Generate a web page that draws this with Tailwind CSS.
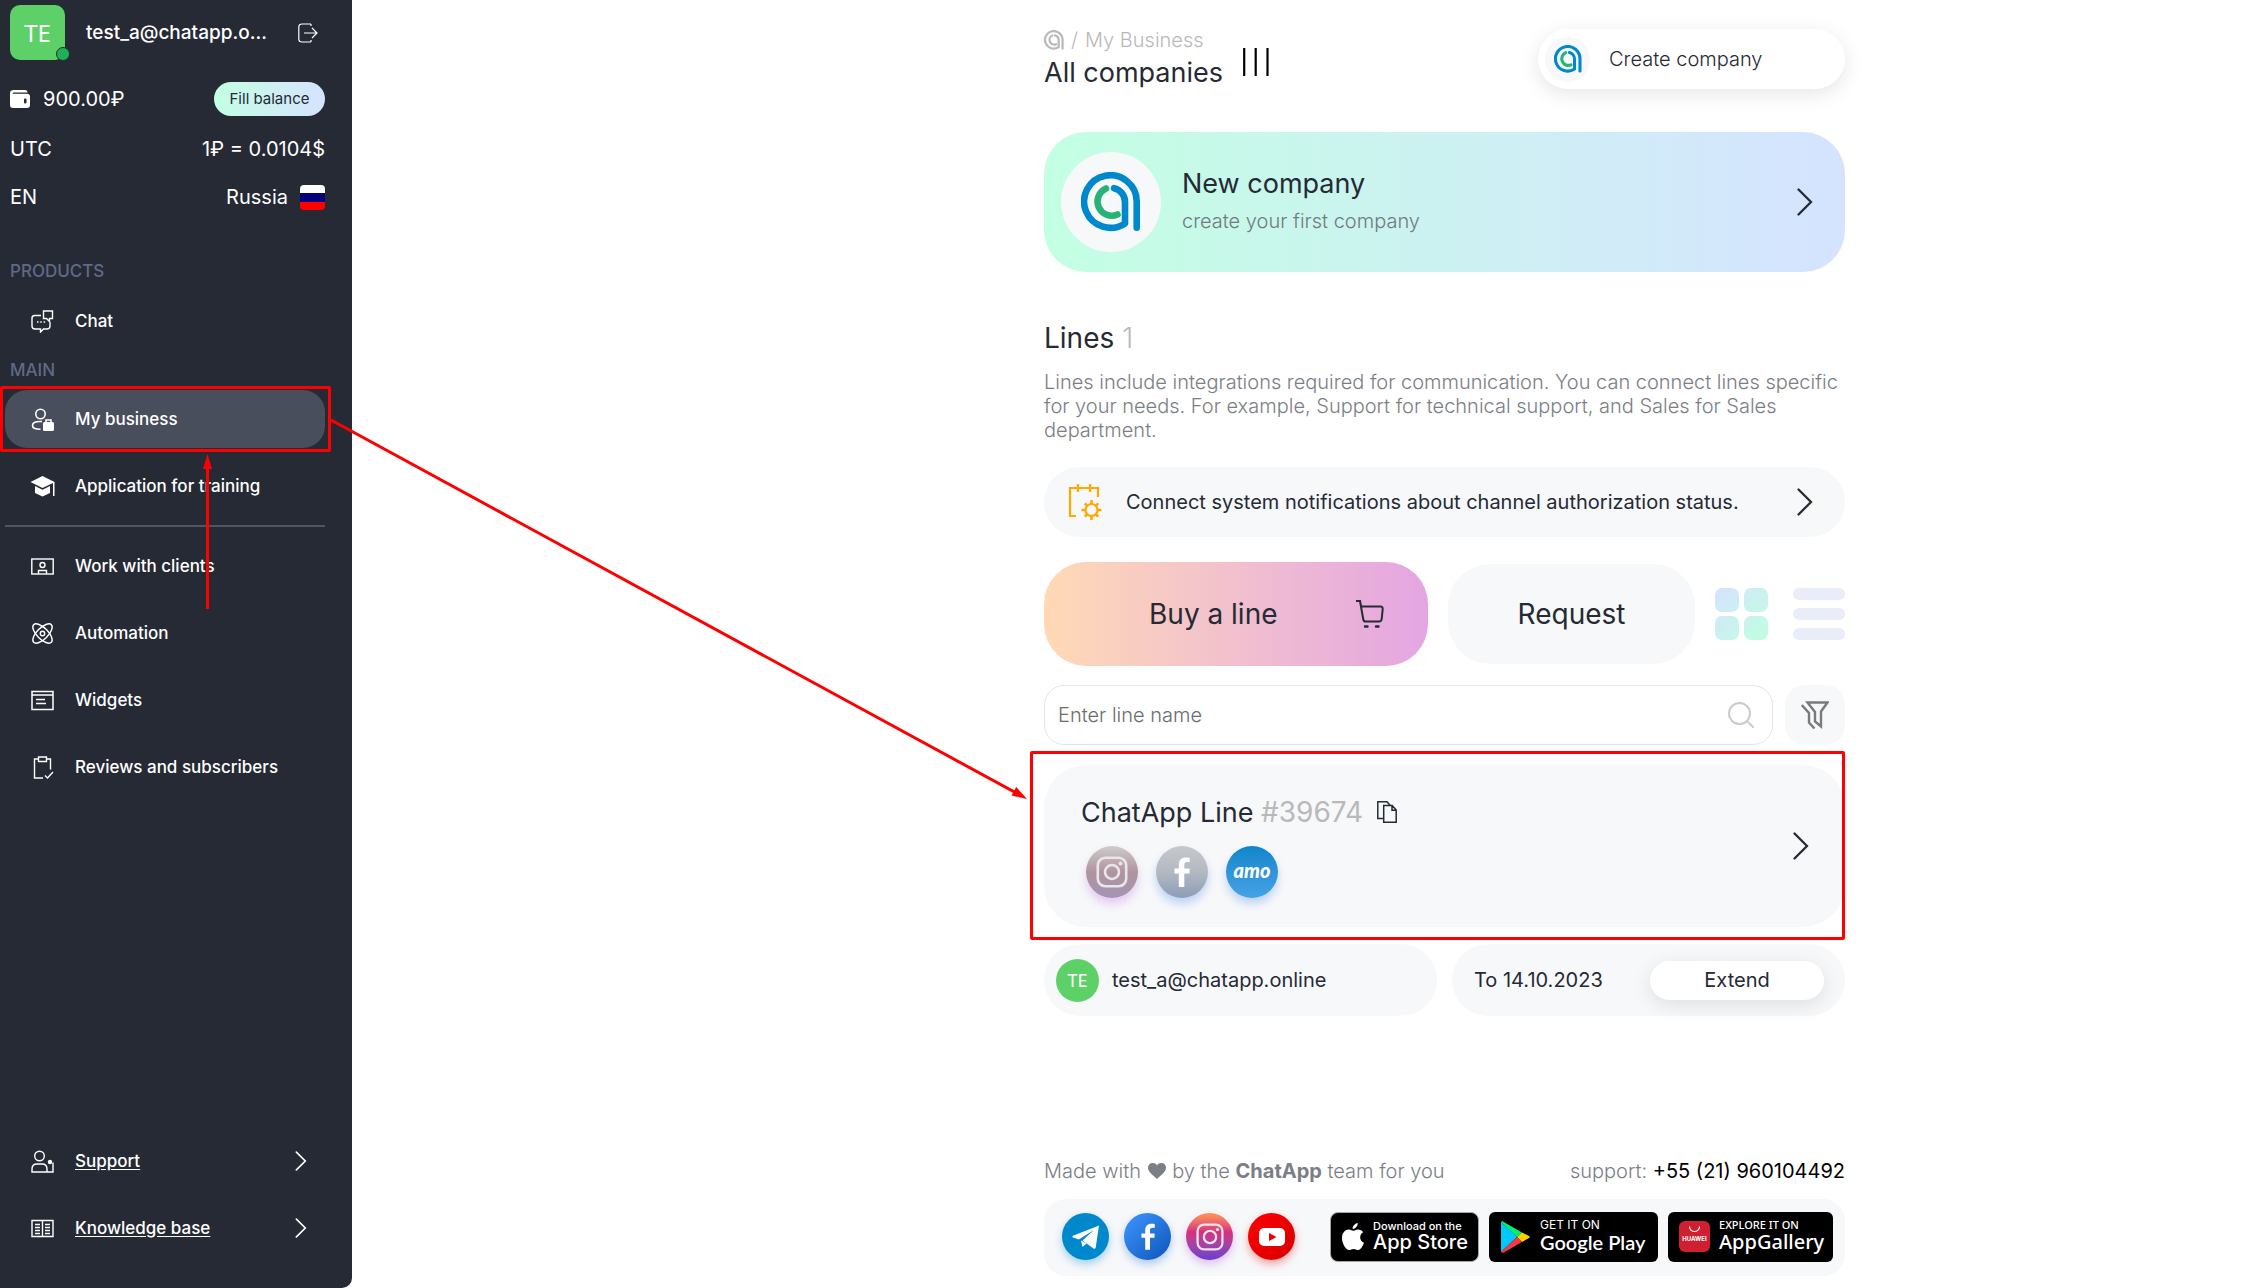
<!DOCTYPE html>
<html lang="en">
<head>
<meta charset="utf-8">
<meta name="viewport" content="width=device-width, initial-scale=1">
<title>ChatApp – All companies</title>
<script src="https://cdn.jsdelivr.net/npm/@tailwindcss/browser@4"></script>
</head>
<body class="relative flex min-h-screen bg-white font-['Inter',sans-serif] text-[20px] leading-[24px] text-[#252a35]">

<!-- Shared symbols -->
<svg class="hidden" aria-hidden="true">
  <symbol id="logo" viewBox="0 0 60 60">
    <g fill="none" stroke-width="6.6" stroke-linecap="round" stroke-linejoin="round">
      <path stroke="#0088cc" d="M55.7 55.7V29.5A26.3 26.3 0 1 0 44 51.4V30A14 14 0 0 0 33 16.2"/>
      <path stroke="#27b376" d="M25 16.5A14 14 0 0 0 36.500 42.500"/>
    </g>
  </symbol>
  <symbol id="logo-mono" viewBox="0 0 60 60">
    <g fill="none" stroke="#b9b9b9" stroke-width="6.6" stroke-linecap="round" stroke-linejoin="round">
      <path d="M55.7 55.7V29.5A26.3 26.3 0 1 0 44 51.4V30A14 14 0 0 0 33 16.2"/>
      <path d="M25 16.5A14 14 0 0 0 36.500 42.500"/>
    </g>
  </symbol>
  <symbol id="chevron" viewBox="0 0 16 28">
    <path d="M1.500 1.500 14 14 1.500 26.500" fill="none" stroke="currentColor" stroke-width="2.300" stroke-linecap="round"/>
  </symbol>
  <symbol id="insta" viewBox="0 0 32 32">
    <g fill="none" stroke="#e8e6ea" stroke-width="2.600"><rect x="1.800" y="1.800" width="28.400" height="28.400" rx="7.500"/><circle cx="16" cy="16" r="7"/></g>
    <circle cx="24.500" cy="7.500" r="1.900" fill="#e8e6ea"/>
  </symbol>
  <symbol id="fb" viewBox="0 0 16 30">
    <path fill="#fff" d="M4.800 30V16.500H.5V11.500h4.300V8C4.800 3 7.500.4 12 .4c1.500 0 2.800.1 3.700.3v4.400h-2.500c-2.200 0-2.900 1.200-2.900 2.900v3.500h5.200v5h-5.200V30z"/>
  </symbol>
</svg>

<aside class="flex w-[352px] shrink-0 flex-col rounded-br-[10px] bg-[#252a35] pt-[5px] pr-[27px] pb-[31px] pl-[5px] text-white">
  <div class="flex h-[55px] items-center pl-[5px]">
    <div class="relative flex size-[55px] shrink-0 items-center justify-center rounded-[10px] bg-[#5dd167] font-['Noto_Sans',sans-serif] text-[24px]">TE
      <span class="absolute -right-[5px] -bottom-px size-[14px] rounded-full border border-[#252a35] bg-[#1fb155]"></span>
    </div>
    <span class="ml-[21px] w-[190px] text-[19px] font-medium">test_a@chatapp.o...</span>
    <button type="button" class="ml-[22px]" aria-label="Log out">
      <svg class="size-[20px]" viewBox="0 0 20 20" fill="none" stroke="#fff" stroke-width="1.200"><path d="M13 1H4Q.8 1 .8 4v12q0 3 3.200 3h9M13 3v-2M13 17v2M6 10h13M14 5l5 5-5 5"/></svg>
    </button>
  </div>
  <div class="mt-[22px] flex h-[34px] items-center pl-[5px]">
    <svg class="mr-[13px] h-[20px] w-[20px]" viewBox="0 0 20 20"><path fill="#fff" d="M4 1h11q2.500 0 2.500 2.500H3.500q-.8.100-.8.700t.8.600H17q3 0 3 3V16q0 3-3 3H3q-3 0-3-3V4Q0 1 4 1z"/><rect x="14" y="9.500" width="2.500" height="5" rx="1" fill="#252a35"/></svg>
    <span>900.00₽</span>
    <button type="button" class="ml-auto h-[34px] w-[111px] rounded-full bg-linear-to-r from-[#c3ffe3] to-[#d5e3ff] text-[15px] text-[#252a35]">Fill balance</button>
  </div>
  <div class="mt-[18px] flex h-[30px] items-center justify-between pl-[5px]"><span>UTC</span><span>1₽ = 0.0104$</span></div>
  <div class="mt-[18px] flex h-[30px] items-center pl-[5px]"><span>EN</span><span class="mr-[12px] ml-auto">Russia</span>
    <svg class="size-[25px] rounded-[4px]" viewBox="0 0 25 25"><path fill="#fff" d="M0 0h25v9H0z"/><path fill="#00007e" d="M0 8h25v9H0z"/><path fill="#f00" d="M0 17h25v8H0z"/></svg>
  </div>

  <h2 class="mt-[47px] pl-[5px] text-[17px] font-medium text-[#5f6b85]">PRODUCTS</h2>
  <nav class="mt-[9px] text-[17px] font-medium">
    <a href="#" class="flex h-[58px] items-center gap-[21px] pl-[26px]">
      <svg class="size-[23px]" viewBox="0 0 23 23" fill="none" stroke="#fff" stroke-width="1.400"><path d="M10 5.500H4Q1 5.500 1 8v8q0 3 3 3h5.500v3l3-3H16q3 0 3-3v-4M12.500 5V1h9v7.500h-3v3l-3-3h-3V5"/><path stroke-width="1.600" d="M6 12h1.500M9.300 12h1.500M12.600 12h1.500"/></svg>
      Chat</a>
  </nav>
  <h2 class="mt-[8px] pl-[5px] text-[17px] font-medium text-[#5f6b85]">MAIN</h2>
  <nav class="mt-[8px] flex flex-col gap-[9px] text-[17px] font-medium">
    <a href="#" class="relative flex h-[58px] items-center gap-[21px] rounded-[22px] bg-[#484e5b] pl-[26px]">
      <svg class="size-[23px]" viewBox="0 0 23 23" fill="none" stroke="#fff" stroke-width="1.600"><circle cx="9.500" cy="6" r="4.700"/><path d="M9 13.500q-7.500 0-7.500 4 0 3.800 8 3.800M9 13.500h2"/><path d="M15 14v-2h5v2"/><rect x="12" y="14" width="11" height="9" rx="1.500" fill="#fff" stroke="none"/></svg>
      My business
      <span class="pointer-events-none absolute -top-[4px] -right-[6px] -bottom-[4px] -left-[5px] rounded-[2px] border-[3px] border-[#ff0000]"></span>
    </a>
    <a href="#" class="flex h-[58px] items-center gap-[21px] pl-[26px]">
      <svg class="size-[23px] overflow-visible" viewBox="0 0 23 23" fill="#fff"><path d="M11.500 1 23.500 7v14H22V8l-10.500 5L-.5 7zM4 11l7.500 3.700L19 11v7l-7.500 3.500L4 18z"/></svg>
      Application for training</a>
  </nav>
  <hr class="mt-[10px] border-t-2 border-[#50555f]">
  <nav class="mt-[10px] flex flex-col gap-[9px] text-[17px] font-medium">
    <a href="#" class="flex h-[58px] items-center gap-[21px] pl-[26px]">
      <svg class="size-[23px]" viewBox="0 0 23 23" fill="none" stroke="#fff" stroke-width="1.400"><rect x=".8" y="4" width="21.400" height="15"/><circle cx="11.500" cy="10" r="2.500"/><path d="M7.500 19v-3.500h8V19"/></svg>
      Work with clients</a>
    <a href="#" class="flex h-[58px] items-center gap-[21px] pl-[26px]">
      <svg class="size-[23px]" viewBox="0 0 23 23" fill="none" stroke="#fff" stroke-width="1.400"><ellipse cx="11.500" cy="11.500" rx="12.500" ry="5.500" transform="rotate(45 11.500 11.500)"/><ellipse cx="11.500" cy="11.500" rx="12.500" ry="5.500" transform="rotate(-45 11.500 11.500)"/><circle cx="11.500" cy="11.500" r="2.200"/></svg>
      Automation</a>
    <a href="#" class="flex h-[58px] items-center gap-[21px] pl-[26px]">
      <svg class="size-[23px]" viewBox="0 0 23 23" fill="none" stroke="#fff" stroke-width="1.500"><rect x="1" y="2.500" width="21" height="18"/><path d="M1 6h21M5 10.500h9M5 14.500h10"/></svg>
      Widgets</a>
    <a href="#" class="flex h-[58px] items-center gap-[21px] pl-[26px]">
      <svg class="size-[23px]" viewBox="0 0 23 23" fill="none" stroke="#fff" stroke-width="1.400"><path d="M7.500 3H3.500v19H12M15.500 3h4v10.500M7.500 1h8v4.500h-8zM14 19.500l2.500 2.500 5.500-6"/></svg>
      Reviews and subscribers</a>
  </nav>
  <nav class="mt-auto flex flex-col gap-[9px] text-[17px] font-medium">
    <a href="#" class="flex h-[58px] items-center gap-[21px] pr-[18px] pl-[26px]">
      <svg class="size-[23px]" viewBox="0 0 23 23" fill="none" stroke="#fff" stroke-width="1.400"><circle cx="8.500" cy="6" r="4.800"/><path d="M1 22v-3q0-5 5-5h5q5 0 5 5v3zM16 22h6V12.500"/><circle cx="19" cy="12" r="1.500" fill="#fff"/></svg>
      <span class="underline underline-offset-2">Support</span><svg class="ml-auto h-[20px] w-[12px]"><use href="#chevron"/></svg></a>
    <a href="#" class="flex h-[58px] items-center gap-[21px] pr-[18px] pl-[26px]">
      <svg class="size-[23px]" viewBox="0 0 23 23" fill="none" stroke="#fff" stroke-width="1.400"><path d="M1 3.500h21v16H1zM11.500 3.500v16M4 7.500h5M4 10.500h5M4 13.500h5M4 16.500h5M14 7.500h5M14 10.500h5M14 13.500h5M14 16.500h5"/></svg>
      <span class="underline underline-offset-2">Knowledge base</span><svg class="ml-auto h-[20px] w-[12px]"><use href="#chevron"/></svg></a>
  </nav>
</aside>

<main class="flex-1 pt-[28px] pb-[10px] pl-[289px]">
 <div class="mx-auto max-w-[801px]">
  <header class="flex items-start justify-between">
    <div>
      <div class="flex items-center font-light text-[#b9b9b9]"><a href="#" aria-label="Home"><svg class="block size-[20px]"><use href="#logo-mono"/></svg></a><span class="mx-[7px]">/</span><a href="#">My Business</a></div>
      <div class="mt-[4px] flex gap-[20px]">
        <h1 class="text-[27px] leading-[34px]">All companies</h1>
        <svg class="-mt-[8px] h-[28px] w-[26px]" viewBox="0 0 26 28"><path d="M1.200 0v28M12.700 0v28M24.500 0v28" stroke="#000" stroke-width="2.200"/></svg>
      </div>
    </div>
    <button type="button" class="mt-px flex h-[60px] w-[307px] items-center rounded-full bg-white pl-[7px] font-light shadow-[0_5px_20px_rgba(0,0,0,0.1)]">
      <span class="flex size-[45px] items-center justify-center rounded-full bg-[#f7f8fa]"><svg class="size-[28px]"><use href="#logo"/></svg></span>
      <span class="ml-[19px]">Create company</span>
    </button>
  </header>

  <a href="#" class="mt-[42px] flex h-[140px] items-center rounded-[42px] bg-linear-to-r from-[#c3ffe3] to-[#d5e3ff] pr-[32px] pl-[17px]">
    <span class="flex size-[100px] items-center justify-center rounded-full bg-[#f7f8fa]"><svg class="size-[60px]"><use href="#logo"/></svg></span>
    <span class="ml-[21px] flex flex-col gap-[8px] pb-[4px]"><span class="text-[27px] leading-[34px]">New company</span><span class="font-light text-[#6f7b80]">create your first company</span></span>
    <svg class="ml-auto h-[28px] w-[16px]"><use href="#chevron"/></svg>
  </a>

  <h2 class="mt-[49px] text-[28px] leading-[34px]">Lines <span class="font-light text-[#b9b9b9]">1</span></h2>
  <p class="mt-[15px] font-light text-[#7c7e86]">Lines include integrations required for communication. You can connect lines specific for your needs. For example, Support for technical support, and Sales for Sales department.</p>

  <a href="#" class="mt-[25px] flex h-[70px] items-center rounded-full bg-[#f7f8fa] pr-[32px] pl-[24px]">
    <svg class="h-[36px] w-[34px]" viewBox="0 0 34 36" fill="none" stroke="#ffa800" stroke-width="2.200"><path d="M8 32H2V4h28v9M10 0v8M22 0v8"/><circle cx="23.500" cy="26" r="6"/><path stroke-width="2.600" d="M23.500 20v-4M23.500 32v4M17.500 26h-4M29.500 26h4M19.300 21.800l-2.500-2.500M27.700 30.200l2.500 2.500M19.300 30.200l-2.500 2.500M27.700 21.800l2.500-2.500"/></svg>
    <span class="ml-[24px]">Connect system notifications about channel authorization status.</span>
    <svg class="ml-auto h-[28px] w-[16px]"><use href="#chevron"/></svg>
  </a>

  <div class="mt-[25px] flex items-center">
    <button type="button" class="flex h-[104px] w-[384px] items-center rounded-[42px] bg-linear-to-r from-[#ffd9b5] to-[#e4a5e2] pr-[44px] pl-[105px] text-[28px] leading-[34px]">Buy a line
      <svg class="ml-auto size-[28px]" viewBox="0 0 28 28" fill="none" stroke="#252a35" stroke-width="2"><path d="M0 1h4l1.200 5.500h19.300q2.300 0 2.200 2.500l-1 10q-.3 2.500-2.700 2.500H9.500Q7.600 21.500 7.200 19L4 1"/><path stroke-width="2.400" stroke-linecap="round" d="M9 26.500h2.500M20 26.500h2.500"/></svg>
    </button>
    <button type="button" class="ml-[20px] h-[100px] w-[247px] rounded-[42px] bg-[#f7f8fa] text-[28px] leading-[34px]">Request</button>
    <button type="button" class="ml-[20px]" aria-label="Tile view">
      <svg class="h-[52px] w-[53px]" viewBox="0 0 53 52"><defs><linearGradient id="tile" gradientUnits="userSpaceOnUse" x1="0" y1="0" x2="53" y2="52"><stop stop-color="#d5e3ff"/><stop offset="1" stop-color="#c0ffe0"/></linearGradient></defs><g fill="url(#tile)"><rect width="24" height="24" rx="7"/><rect x="29" width="24" height="24" rx="7"/><rect y="28" width="24" height="24" rx="7"/><rect x="29" y="28" width="24" height="24" rx="7"/></g></svg>
    </button>
    <button type="button" class="ml-auto" aria-label="List view">
      <svg class="size-[52px]" viewBox="0 0 52 52" fill="#e8edf9"><rect width="52" height="12" rx="6"/><rect y="20" width="52" height="12" rx="6"/><rect y="40" width="52" height="12" rx="6"/></svg>
    </button>
  </div>

  <div class="mt-[19px] flex gap-[12px]">
    <label class="flex h-[60px] flex-1 items-center rounded-[20px] border border-[#e4e4ee] pr-[18px] pl-[13px]">
      <input type="text" aria-label="Line name" placeholder="Enter line name" class="min-w-0 flex-1 font-light outline-none placeholder:text-[#6c6c6c]">
      <svg class="size-[26px]" viewBox="0 0 26 26" fill="none" stroke="#c9cbce" stroke-width="2"><circle cx="11.500" cy="11.500" r="10.500"/><path stroke-linecap="round" d="M19 19l6 6"/></svg>
    </label>
    <button type="button" class="flex size-[60px] items-center justify-center rounded-[20px] bg-[#f7f8fa]" aria-label="Filter">
      <svg class="size-[28px]" viewBox="0 0 28 28" fill="none" stroke="#7a7a7a" stroke-width="2.400"><path d="M6.500 1.500h20L20 10.500v15L14 20.500V11zM.8 4 8 12v9.500l5.500 6"/></svg>
    </button>
  </div>

  <div class="relative mt-[20px]">
    <article class="flex h-[162px] items-center rounded-[42px] bg-[#f7f8fa] pr-[36px] pl-[37px]">
      <div>
        <div class="flex items-center"><h3 class="text-[27px] leading-[34px]">ChatApp Line <span class="text-[28px] text-[#b9b9b9]">#39674</span></h3>
          <button type="button" class="ml-[14px]" aria-label="Copy line number"><svg class="h-[22px] w-[20px]" viewBox="0 0 20 22" fill="none" stroke="#252a35" stroke-width="1.500"><path d="M7 17.500H.8V.8H10l3 3.500M6.700 4.500h8.500l4 4.500v12.200H6.700zM15 4.500v4.700h4"/></svg></button>
        </div>
        <div class="mt-[16px] flex gap-[18px] pl-[5px]">
          <span class="flex size-[52px] items-center justify-center rounded-full bg-linear-to-b from-[#cfcbca] via-[#b0949d] to-[#a394b5] shadow-[0_6px_8px_rgba(190,100,220,0.3)]"><svg class="size-[32px]"><use href="#insta"/></svg></span>
          <span class="flex size-[52px] items-center justify-center rounded-full bg-linear-to-b from-[#c6c8cc] via-[#b3b9c2] to-[#8b9db8] shadow-[0_6px_8px_rgba(60,130,230,0.3)]"><svg class="h-[30px] w-[16px]"><use href="#fb"/></svg></span>
          <span class="flex size-[52px] items-center justify-center rounded-full bg-linear-to-b from-[#0a86cb] to-[#45a2e6] pb-[3px] font-['Lato',sans-serif] text-[20px] font-black text-white italic shadow-[0_6px_8px_rgba(60,130,230,0.3)]">amo</span>
        </div>
      </div>
      <svg class="ml-auto h-[28px] w-[16px]"><use href="#chevron"/></svg>
    </article>
    <span class="pointer-events-none absolute -top-[14px] right-0 -bottom-[13px] -left-[14px] rounded-[2px] border-[3px] border-[#ff0000]"></span>
  </div>

  <div class="mt-[17px] grid grid-cols-2 gap-[15px]">
    <div class="flex h-[72px] items-center rounded-full bg-[#f7f8fa] pl-[12px]">
      <span class="flex size-[43px] items-center justify-center rounded-full bg-[#5dd167] font-['Noto_Sans',sans-serif] text-[18px] text-white">TE</span>
      <span class="ml-[13px]">test_a@chatapp.online</span>
    </div>
    <div class="flex h-[72px] items-center justify-between rounded-full bg-[#f7f8fa] pr-[21px] pl-[22px]">
      <span>To 14.10.2023</span>
      <button type="button" class="h-[39px] w-[174px] rounded-full bg-white shadow-[0_5px_20px_rgba(0,0,0,0.1)]">Extend</button>
    </div>
  </div>

  <footer class="mt-[143px]">
    <div class="flex justify-between font-light text-[#7c7e86]">
      <p>Made with <svg class="mx-px inline h-[16px] w-[18px] align-[-1px]" viewBox="0 0 18 16"><path fill="#7c7e86" d="M9 16C4 11.500 0 8.500 0 4.800 0 2 2 0 4.700 0 6.500 0 8 .8 9 2.400 10 .8 11.500 0 13.300 0 16 0 18 2 18 4.800 18 8.500 14 11.500 9 16z"/></svg> by the <b class="font-bold">ChatApp</b> team for you</p>
      <p>support: <a href="#" class="font-normal text-black">+55 (21) 960104492</a></p>
    </div>
    <div class="mt-[16px] flex h-[77px] items-center rounded-[22px] bg-[#f7f8fa] pr-[12px] pb-[2px] pl-[18px]">
      <div class="flex gap-[15px]">
        <a href="#" aria-label="Telegram" class="flex size-[47px] items-center justify-center rounded-full bg-[#0088cc] shadow-[0_4px_8px_rgba(0,136,204,0.35)]"><svg class="size-[26px] overflow-visible" viewBox="0 0 26 26" fill="#fff"><path d="M26 1.500 0 11.800q-1.600.9 0 1.800l5.800 1.900L21 6 9.500 16.500l11 8q1.700.9 2.200-1z"/><path d="M8 16.500l1.500 6.500 4-3.500z"/></svg></a>
        <a href="#" aria-label="Facebook" class="flex size-[47px] items-center justify-center rounded-full bg-linear-to-br from-[#3f97ff] to-[#0b55ba] shadow-[0_4px_8px_rgba(30,110,220,0.35)]"><svg class="h-[27px] w-[14px]"><use href="#fb"/></svg></a>
        <a href="#" aria-label="Instagram" class="flex size-[47px] items-center justify-center rounded-full bg-linear-to-b from-[#fb8c55] from-5% via-[#d82d7e] via-40% to-[#6a3ad0] shadow-[0_4px_8px_rgba(160,60,220,0.3)]"><svg class="size-[28px]"><use href="#insta"/></svg></a>
        <a href="#" aria-label="YouTube" class="flex size-[47px] items-center justify-center rounded-full bg-linear-to-br from-[#ff0000] to-[#d60000] shadow-[0_4px_8px_rgba(230,0,0,0.35)]"><svg class="h-[18px] w-[26px]" viewBox="0 0 26 18"><rect width="26" height="18" rx="5" fill="#fff"/><path d="M10 5l7.500 4L10 13z" fill="#e00"/></svg></a>
      </div>
      <div class="ml-auto flex items-center gap-[10px] text-white">
        <a href="#" class="flex h-[50px] w-[149px] items-center rounded-[8px] border border-[#a6a6a6] bg-black pl-[11px]">
          <svg class="h-[28px] w-[22px]" viewBox="0 0 22 28" fill="#fff"><path d="M15.700 0c.3 2.600-2.200 6-5 6C10.300 3.300 12.800.5 15.700 0zM11.200 7.800c1.200 0 2.700-1.400 5-1.400 1.800 0 3.800 1 5 2.800-4.500 2.600-3.700 8.700.8 10.600-1.200 3.500-3.400 7.200-5.800 7.200-1.800 0-2.400-1.100-4.600-1.100S8.700 27 7.100 27C4 27 0 20.700 0 15c0-5.500 3.500-8.500 6.700-8.500 2.100 0 3.600 1.300 4.500 1.300z"/></svg>
          <span class="ml-[9px] flex flex-col pb-[2px] font-medium"><span class="text-[11px] leading-[12px]">Download on the</span><span class="text-[20px] leading-[20px]">App Store</span></span>
        </a>
        <a href="#" class="flex h-[50px] w-[169px] items-center rounded-[6px] bg-black pl-[12px]">
          <svg class="h-[32px] w-[29px]" viewBox="0 0 29 32"><path fill="#00c8ff" d="M0 1v30l16-15z"/><path fill="#00f076" d="M1 0l20 11.500L16 16 0 1z"/><path fill="#ffd000" d="M21 11.500l7 3.500q1.500 1 0 2l-7 4-5-5z"/><path fill="#f53848" d="M0 31l16-15 5 5L2 32z"/></svg>
          <span class="ml-[10px] flex flex-col pb-[4px]"><span class="text-[12px] leading-[14px]">GET IT ON</span><span class="font-['Lato',sans-serif] text-[20px] leading-[20px] font-semibold">Google Play</span></span>
        </a>
        <a href="#" class="flex h-[50px] w-[165px] items-center rounded-[6px] bg-black pl-[11px]">
          <svg class="size-[31px]" viewBox="0 0 31 31"><rect width="31" height="31" rx="6" fill="#cf1f31"/><path d="M10.500 5.500a5 5 0 0 0 10 0" fill="none" stroke="#fff" stroke-width="1.100"/><text x="15.500" y="20" text-anchor="middle" font-family="Inter" font-weight="700" font-size="6" fill="#fff">HUAWEI</text></svg>
          <span class="ml-[9px] flex flex-col pb-[4px] font-['Noto_Sans',sans-serif] font-medium"><span class="text-[11px] leading-[14px]">EXPLORE IT ON</span><span class="text-[20px] leading-[20px]">AppGallery</span></span>
        </a>
      </div>
    </div>
  </footer>
 </div>
</main>

<!-- Walkthrough arrows laid over the page -->
<svg class="pointer-events-none absolute top-0 left-0 h-[820px] w-[1040px]" viewBox="0 0 1040 820" fill="none" stroke="#ff0000" stroke-width="3" aria-hidden="true">
  <path d="M207.500 609V466M331 420 1018 794"/>
  <path fill="#ff0000" stroke="none" d="M207.500 454l4.500 15h-9zM1027 799l-15.500-3.400 4.700-8.700z"/>
</svg>
</body>
</html>
